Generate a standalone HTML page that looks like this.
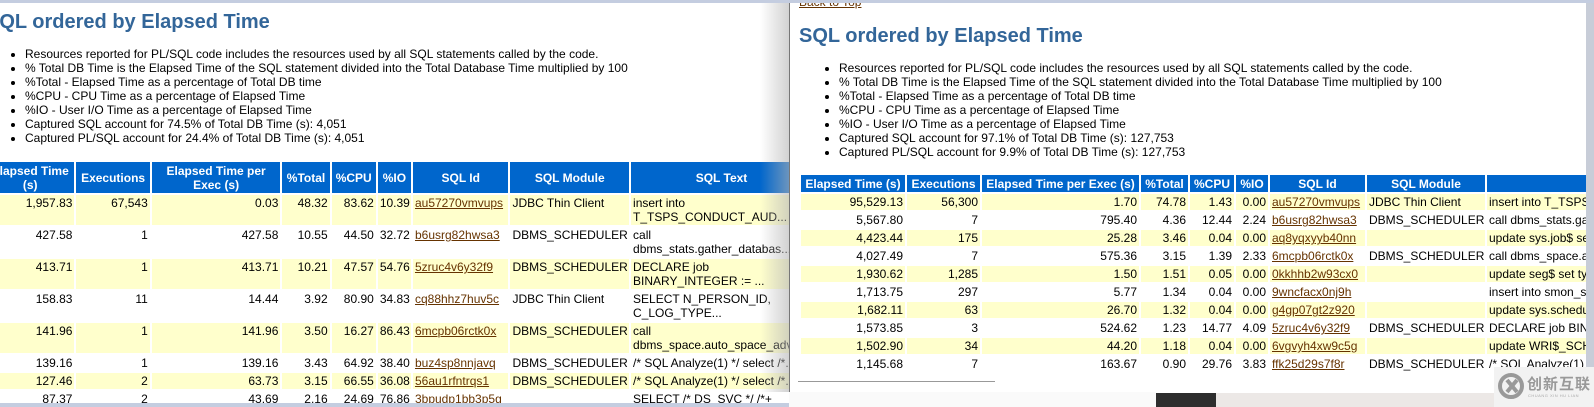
<!DOCTYPE html>
<html><head><meta charset="utf-8"><style>
*{margin:0;padding:0;box-sizing:border-box}
body{width:1594px;height:407px;overflow:hidden;background:#fff;position:relative;font-family:"Liberation Sans",Arial,sans-serif;font-size:12px;color:#000}
.abs{position:absolute}
h1{font-size:20px;font-weight:bold;color:#336699;white-space:nowrap;position:absolute}
ul{position:absolute;list-style:disc;line-height:14px;white-space:nowrap}
table{position:absolute;border-collapse:separate;border-spacing:2px;table-layout:fixed;font-size:12px}
th{background:#0066cc;color:#fff;font-weight:bold;padding:1px 2px;line-height:14px;text-align:center;vertical-align:middle;overflow:hidden;white-space:nowrap}
td{padding:1px 2px;line-height:14px;vertical-align:top;overflow:hidden;white-space:nowrap}
tr.o td{background:#ffffcc}
td.r{text-align:right}
a{color:#663300;text-decoration:underline}
#L th{white-space:normal}
#L td.w{white-space:normal}
#R td{vertical-align:middle;padding:1px 2px;height:16px}
</style></head><body>
<div class="abs" style="left:0;top:0;width:1594px;height:3px;background:#c4cde0"></div>

<!-- left pane -->
<div class="abs" style="left:0;top:3px;width:789px;height:400px;overflow:hidden">
<h1 style="left:-14px;top:8px">SQL ordered by Elapsed Time</h1>
<ul style="left:25px;top:44px">
<li>Resources reported for PL/SQL code includes the resources used by all SQL statements called by the code.</li>
<li>% Total DB Time is the Elapsed Time of the SQL statement divided into the Total Database Time multiplied by 100</li>
<li>%Total - Elapsed Time as a percentage of Total DB time</li>
<li>%CPU - CPU Time as a percentage of Elapsed Time</li>
<li>%IO - User I/O Time as a percentage of Elapsed Time</li>
<li>Captured SQL account for 74.5% of Total DB Time (s): 4,051</li>
<li>Captured PL/SQL account for 24.4% of Total DB Time (s): 4,051</li>
</ul>
<table id="L" style="left:-16px;top:157px;width:830px">
<colgroup><col style="width:88px"><col style="width:73px"><col style="width:128px"><col style="width:47px"><col style="width:44px"><col style="width:33px"><col style="width:95px"><col style="width:118px"><col style="width:180px"></colgroup>
<tr style="height:31px"><th>Elapsed Time (s)</th><th>Executions</th><th>Elapsed Time per Exec (s)</th><th>%Total</th><th>%CPU</th><th>%IO</th><th>SQL Id</th><th>SQL Module</th><th>SQL Text</th></tr>
<tr class="o" style="height:30px"><td class="r">1,957.83</td><td class="r">67,543</td><td class="r">0.03</td><td class="r">48.32</td><td class="r">83.62</td><td class="r">10.39</td><td><a>au57270vmvups</a></td><td>JDBC Thin Client</td><td class="w">insert into T_TSPS_CONDUCT_AUD...</td></tr>
<tr style="height:30px"><td class="r">427.58</td><td class="r">1</td><td class="r">427.58</td><td class="r">10.55</td><td class="r">44.50</td><td class="r">32.72</td><td><a>b6usrg82hwsa3</a></td><td>DBMS_SCHEDULER</td><td class="w">call dbms_stats.gather_databas...</td></tr>
<tr class="o" style="height:30px"><td class="r">413.71</td><td class="r">1</td><td class="r">413.71</td><td class="r">10.21</td><td class="r">47.57</td><td class="r">54.76</td><td><a>5zruc4v6y32f9</a></td><td>DBMS_SCHEDULER</td><td class="w">DECLARE job BINARY_INTEGER := ...</td></tr>
<tr style="height:30px"><td class="r">158.83</td><td class="r">11</td><td class="r">14.44</td><td class="r">3.92</td><td class="r">80.90</td><td class="r">34.83</td><td><a>cq88hhz7huv5c</a></td><td>JDBC Thin Client</td><td class="w">SELECT N_PERSON_ID, C_LOG_TYPE...</td></tr>
<tr class="o" style="height:30px"><td class="r">141.96</td><td class="r">1</td><td class="r">141.96</td><td class="r">3.50</td><td class="r">16.27</td><td class="r">86.43</td><td><a>6mcpb06rctk0x</a></td><td>DBMS_SCHEDULER</td><td>call<br>dbms_space.auto_space_advisor_job_proc</td></tr>
<tr style="height:16px"><td class="r">139.16</td><td class="r">1</td><td class="r">139.16</td><td class="r">3.43</td><td class="r">64.92</td><td class="r">38.40</td><td><a>buz4sp8nnjavq</a></td><td>DBMS_SCHEDULER</td><td>/* SQL Analyze(1) */ select /*...</td></tr>
<tr class="o" style="height:16px"><td class="r">127.46</td><td class="r">2</td><td class="r">63.73</td><td class="r">3.15</td><td class="r">66.55</td><td class="r">36.08</td><td><a>56au1rfntrqs1</a></td><td>DBMS_SCHEDULER</td><td>/* SQL Analyze(1) */ select /*...</td></tr>
<tr style="height:16px"><td class="r">87.37</td><td class="r">2</td><td class="r">43.69</td><td class="r">2.16</td><td class="r">24.69</td><td class="r">76.86</td><td><a>3bpudp1bb3p5g</a></td><td></td><td>SELECT /* DS_SVC */ /*+</td></tr>
</table>
</div>
<div class="abs" style="left:0;top:403px;width:1156px;height:4px;background:#c4cde0"></div>
<div class="abs" style="left:760px;top:3px;width:29px;height:389px;background:linear-gradient(to right,rgba(255,255,255,0),rgba(180,180,180,.6))"></div>

<!-- right pane -->
<div class="abs" style="left:789px;top:3px;width:797px;height:389px;overflow:hidden;background:#fff;border-left:1px solid #777">
<a class="abs" style="left:9px;top:-8px;font-size:12px">Back to Top</a>
<h1 style="left:9px;top:22px">SQL ordered by Elapsed Time</h1>
<ul style="left:49px;top:58px">
<li>Resources reported for PL/SQL code includes the resources used by all SQL statements called by the code.</li>
<li>% Total DB Time is the Elapsed Time of the SQL statement divided into the Total Database Time multiplied by 100</li>
<li>%Total - Elapsed Time as a percentage of Total DB time</li>
<li>%CPU - CPU Time as a percentage of Elapsed Time</li>
<li>%IO - User I/O Time as a percentage of Elapsed Time</li>
<li>Captured SQL account for 97.1% of Total DB Time (s): 127,753</li>
<li>Captured PL/SQL account for 9.9% of Total DB Time (s): 127,753</li>
</ul>
<table id="R" style="left:9px;top:170px;width:940px">
<colgroup><col style="width:104px"><col style="width:73px"><col style="width:157px"><col style="width:47px"><col style="width:44px"><col style="width:32px"><col style="width:95px"><col style="width:118px"><col style="width:250px"></colgroup>
<tr style="height:17px"><th>Elapsed Time (s)</th><th>Executions</th><th>Elapsed Time per Exec (s)</th><th>%Total</th><th>%CPU</th><th>%IO</th><th>SQL Id</th><th>SQL Module</th><th>SQL Text</th></tr>
<tr class="o"><td class="r">95,529.13</td><td class="r">56,300</td><td class="r">1.70</td><td class="r">74.78</td><td class="r">1.43</td><td class="r">0.00</td><td><a>au57270vmvups</a></td><td>JDBC Thin Client</td><td>insert into T_TSPS_CONDUCT</td></tr>
<tr><td class="r">5,567.80</td><td class="r">7</td><td class="r">795.40</td><td class="r">4.36</td><td class="r">12.44</td><td class="r">2.24</td><td><a>b6usrg82hwsa3</a></td><td>DBMS_SCHEDULER</td><td>call dbms_stats.gather</td></tr>
<tr class="o"><td class="r">4,423.44</td><td class="r">175</td><td class="r">25.28</td><td class="r">3.46</td><td class="r">0.04</td><td class="r">0.00</td><td><a>aq8yqxyyb40nn</a></td><td></td><td>update sys.job$ set</td></tr>
<tr><td class="r">4,027.49</td><td class="r">7</td><td class="r">575.36</td><td class="r">3.15</td><td class="r">1.39</td><td class="r">2.33</td><td><a>6mcpb06rctk0x</a></td><td>DBMS_SCHEDULER</td><td>call dbms_space.auto</td></tr>
<tr class="o"><td class="r">1,930.62</td><td class="r">1,285</td><td class="r">1.50</td><td class="r">1.51</td><td class="r">0.05</td><td class="r">0.00</td><td><a>0kkhhb2w93cx0</a></td><td></td><td>update seg$ set type</td></tr>
<tr><td class="r">1,713.75</td><td class="r">297</td><td class="r">5.77</td><td class="r">1.34</td><td class="r">0.04</td><td class="r">0.00</td><td><a>9wncfacx0nj9h</a></td><td></td><td>insert into smon_scn</td></tr>
<tr class="o"><td class="r">1,682.11</td><td class="r">63</td><td class="r">26.70</td><td class="r">1.32</td><td class="r">0.04</td><td class="r">0.00</td><td><a>g4gp07gt2z920</a></td><td></td><td>update sys.scheduler</td></tr>
<tr><td class="r">1,573.85</td><td class="r">3</td><td class="r">524.62</td><td class="r">1.23</td><td class="r">14.77</td><td class="r">4.09</td><td><a>5zruc4v6y32f9</a></td><td>DBMS_SCHEDULER</td><td>DECLARE job BINARY</td></tr>
<tr class="o"><td class="r">1,502.90</td><td class="r">34</td><td class="r">44.20</td><td class="r">1.18</td><td class="r">0.04</td><td class="r">0.00</td><td><a>6vgvyh4xw9c5g</a></td><td></td><td>update WRI$_SCH</td></tr>
<tr><td class="r">1,145.68</td><td class="r">7</td><td class="r">163.67</td><td class="r">0.90</td><td class="r">29.76</td><td class="r">3.83</td><td><a>ffk25d29s7f8r</a></td><td>DBMS_SCHEDULER</td><td>/* SQL Analyze(1) */</td></tr>
</table>
<div class="abs" style="left:8px;top:378px;width:197px;height:1px;background:#999"></div>
</div>
<div class="abs" style="left:1586px;top:3px;width:8px;height:404px;background:#c8cdd8"></div>
<div class="abs" style="left:789px;top:392px;width:367px;height:15px;background:#fafafa"></div>
<div class="abs" style="left:1156px;top:393px;width:60px;height:14px;background:#2e2e2e"></div>
<div class="abs" style="left:1216px;top:393px;width:278px;height:14px;background:#ece8e6"></div>

<!-- watermark -->
<div class="abs" style="left:1494px;top:367px;width:100px;height:40px;background:#f2f2f2"></div>
<svg class="abs" style="left:1497px;top:372px" width="28" height="28" viewBox="0 0 28 28"><circle cx="14" cy="14" r="11" fill="none" stroke="#999" stroke-width="4"/><path d="M10 8 L20 20 M20 8 L10 20" stroke="#999" stroke-width="4"/></svg>
<div class="abs" style="left:1527px;top:373px;font-family:'Liberation Sans','Noto Sans CJK SC',sans-serif;font-size:15px;color:#999;font-weight:bold;letter-spacing:1px">创新互联</div>
<div class="abs" style="left:1528px;top:393px;font-size:4px;color:#aaa;letter-spacing:.5px">CHUANG XIN HU LIAN</div>
</body></html>
